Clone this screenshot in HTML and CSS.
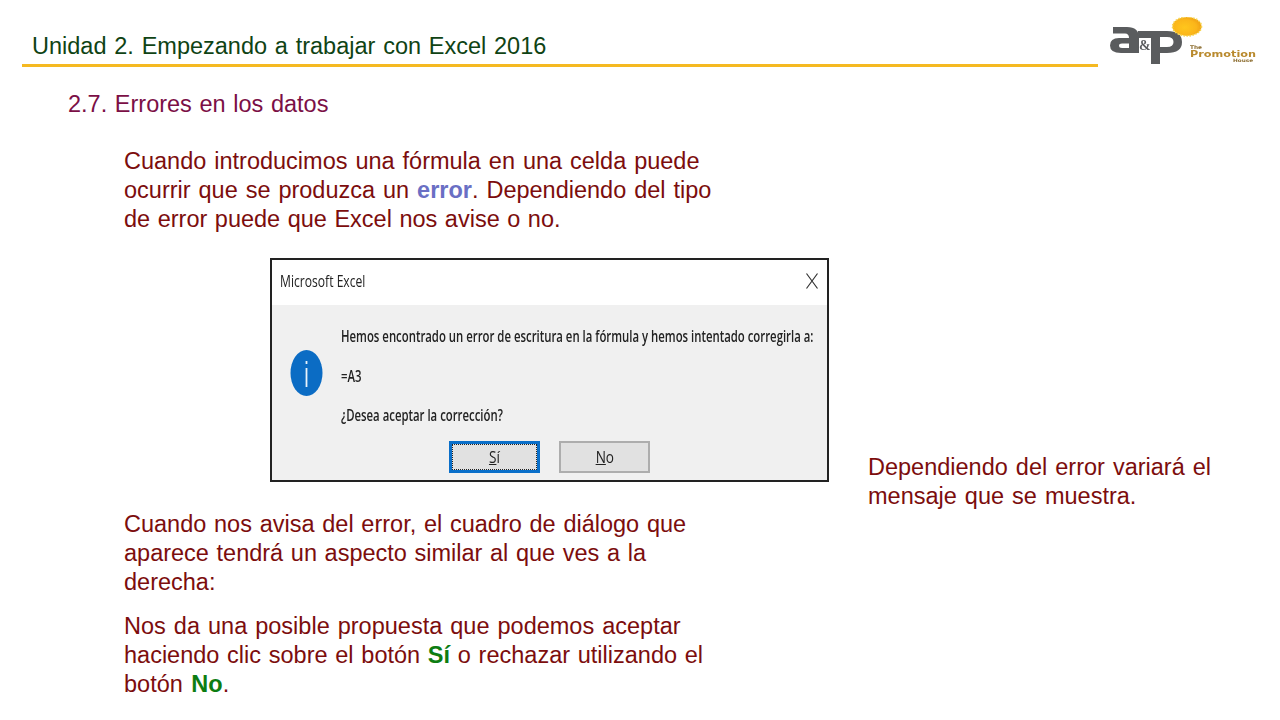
FILE: index.html
```html
<!DOCTYPE html>
<html lang="es">
<head>
<meta charset="utf-8">
<title>Unidad 2. Empezando a trabajar con Excel 2016</title>
<link rel="stylesheet" href="styles.css">
</head>
<body>
<div class="slide">
  <header class="top">
    <div class="heading">
      <h1 class="title">Unidad 2. Empezando a trabajar con Excel 2016</h1>
    </div>
    <svg class="logo" viewBox="0 0 152 50" width="152" height="50" aria-label="a&amp;p The Promotion House">
      <defs>
        <radialGradient id="sun" cx="0.42" cy="0.55" r="0.62">
          <stop offset="0" stop-color="#ffc61c"/>
          <stop offset="0.65" stop-color="#fbb61a"/>
          <stop offset="1" stop-color="#ee9c12"/>
        </radialGradient>
      </defs>
      <path d="M6 10H20Q32 10 32 21V36H14Q3 36 3 28.5Q3 21 12 21H22Q22 16.5 18 16.5H6Z M15 26.5Q12 26.5 12 28.5Q12 31 15 31H22V26.5Z" fill="#5a5c5e" fill-rule="evenodd"/>
      <path d="M31 14H60Q75 14 75 25Q75 36 60 36H53V47H44V21H31Z M53 20V30H60Q66.5 30 66.5 25Q66.5 20 60 20Z" fill="#5a5c5e" fill-rule="evenodd"/>
      <text class="logo-amp" x="32" y="33">&amp;</text>
      <ellipse cx="80" cy="9.5" rx="14.5" ry="9.5" fill="url(#sun)" stroke="#f6d650" stroke-width="1.6" stroke-dasharray="1.5 1.5"/>
      <text class="logo-the" x="83" y="31.5" textLength="12" lengthAdjust="spacingAndGlyphs">The</text>
      <text class="logo-promo" x="83" y="40" textLength="66" lengthAdjust="spacingAndGlyphs">Promotion</text>
      <text class="logo-house" x="126" y="45" textLength="20" lengthAdjust="spacingAndGlyphs">House</text>
    </svg>
  </header>

  <h2 class="section">2.7. Errores en los datos</h2>

  <main class="content">
    <div class="left">
      <p class="para">
        <span class="line l1">Cuando introducimos una fórmula en una celda puede</span>
        <span class="line l2">ocurrir que se produzca un <b class="hl-error">error</b>. Dependiendo del tipo</span>
        <span class="line l3">de error puede que Excel nos avise o no.</span>
      </p>

      <div class="dialog">
        <div class="dlg-titlebar">
          <span class="dlg-title">Microsoft Excel</span>
          <svg class="dlg-close" viewBox="0 0 12 16" width="12" height="16"><path d="M0.5 0.5 11.5 15.5M11.5 0.5 0.5 15.5" stroke="#333" stroke-width="1.2" fill="none"/></svg>
        </div>
        <div class="dlg-body">
          <div class="dlg-main">
            <svg class="dlg-icon" viewBox="0 0 33 46" width="33" height="46">
              <ellipse cx="16.5" cy="23" rx="16" ry="23" fill="#0b6cc4"/>
              <rect x="15.6" y="18" width="1.8" height="19" fill="#e8f2fb"/>
              <rect x="15.6" y="11" width="1.8" height="3" fill="#e8f2fb"/>
            </svg>
            <div class="dlg-text">
              <p class="dlg-line">Hemos encontrado un error de escritura en la fórmula y hemos intentado corregirla a:</p>
              <p class="dlg-line">=A3</p>
              <p class="dlg-line">¿Desea aceptar la corrección?</p>
            </div>
          </div>
          <div class="dlg-buttons">
            <button class="btn btn-default"><span class="btn-label"><u>S</u>í</span></button>
            <button class="btn"><span class="btn-label"><u>N</u>o</span></button>
          </div>
        </div>
      </div>

      <p class="para para-after">
        <span class="line l4">Cuando nos avisa del error, el cuadro de diálogo que</span>
        <span class="line l5">aparece tendrá un aspecto similar al que ves a la</span>
        <span class="line">derecha:</span>
      </p>
      <p class="para para-last">
        <span class="line l7">Nos da una posible propuesta que podemos aceptar</span>
        <span class="line l8">haciendo clic sobre el botón <b class="hl-ok">Sí</b> o rechazar utilizando el</span>
        <span class="line l9">botón <b class="hl-ok">No</b>.</span>
      </p>
    </div>
    <aside class="right">
      <p class="para">
        <span class="line l7">Dependiendo del error variará el</span>
        <span class="line l7">mensaje que se muestra.</span>
      </p>
    </aside>
  </main>
</div>
</body>
</html>
```

FILE: styles.css
```css
* { box-sizing: border-box; }
html, body { margin: 0; padding: 0; background: #fff; }
body { font-family: "Liberation Sans", Arial, sans-serif; }
.slide { width: 1280px; height: 720px; overflow: hidden; display: flex; flex-direction: column; }

.top { display: flex; align-items: flex-start; padding: 17px 0 0 22px; height: 67px; }
.heading { width: 1076px; height: 50px; border-bottom: 3px solid #f5b921; padding: 15px 0 0 10px; }
.title { margin: 0; font-size: 23.5px; line-height: 29px; font-weight: 400; color: #0f4314; white-space: nowrap; word-spacing: 1.25px; }
.logo { margin: 0 0 0 9px; flex: none; filter: blur(0.4px); }
.logo-amp { font: 700 14px "Liberation Serif", serif; fill: #5a5c5e; }
.logo-the { font: 700 5px "DejaVu Sans", sans-serif; fill: #8a6a2c; }
.logo-promo { font: 700 9.5px "DejaVu Sans", sans-serif; fill: #b98a2e; }
.logo-house { font: 700 4.5px "DejaVu Sans", sans-serif; fill: #8a6a2c; }

.section { margin: 23px 0 0 68px; font-size: 23.5px; line-height: 29px; font-weight: 400; color: #7b0f46; word-spacing: 1.1px; }

.content { display: flex; padding: 28px 0 0 124px; }
.left { width: 705px; flex: none; }
.right { margin: 306px 0 0 39px; width: 360px; }

.para { margin: 0; font-size: 23.5px; line-height: 29px; color: #7c0d0d; }
.line { display: block; white-space: nowrap; }
.l1 { word-spacing: 1.4px; }
.l2 { word-spacing: 1.4px; }
.l3 { word-spacing: 1px; }
.l4 { word-spacing: 1.2px; }
.l5 { word-spacing: 1.1px; }
.l7 { word-spacing: 1.5px; }
.l8 { word-spacing: 1.2px; }
.l9 { word-spacing: 2px; }
.para-after { margin-top: 28px; }
.para-last { margin-top: 15px; }
.hl-error { color: #6a6fc4; }
.hl-ok { color: #0d7d12; }

.dialog { margin: 24px 0 0 146px; width: 559px; height: 224px; border: 2px solid #222; background: #f0f0f0; display: flex; flex-direction: column; font-family: "Open Sans", sans-serif; color: #222; filter: blur(0.3px); }
.dlg-titlebar { height: 45px; background: #fff; display: flex; justify-content: space-between; align-items: center; padding: 0 9px 4px 8px; flex: none; }
.dlg-title { display: inline-block; font-size: 17px; font-weight: 400; transform: scaleX(0.713); transform-origin: left center; white-space: nowrap; }
.dlg-body { flex: 1; display: flex; flex-direction: column; }
.dlg-main { display: flex; align-items: flex-start; padding: 21px 0 0 18px; height: 136px; flex: none; }
.dlg-icon { flex: none; margin: 24px 18px 0 0; }
.dlg-text { flex: 1; min-width: 0; }
.dlg-line { margin: 0 0 19.5px; font-size: 16px; line-height: 20px; font-weight: 600; white-space: nowrap; transform: scaleX(0.71); transform-origin: left center; }
.dlg-line:last-child { margin-bottom: 0; }
.dlg-buttons { display: flex; gap: 19px; padding: 0 0 0 177px; }
.btn { width: 91px; height: 32px; background: #e1e1e1; border: 2px solid #adadad; font: 500 16px "Open Sans", sans-serif; color: #222; padding: 0; }
.btn-label { display: inline-block; transform: scaleX(0.85); }
.btn-default { border: 3px solid #0a6fc9; outline: 1px dotted #222; outline-offset: -4px; }
```
